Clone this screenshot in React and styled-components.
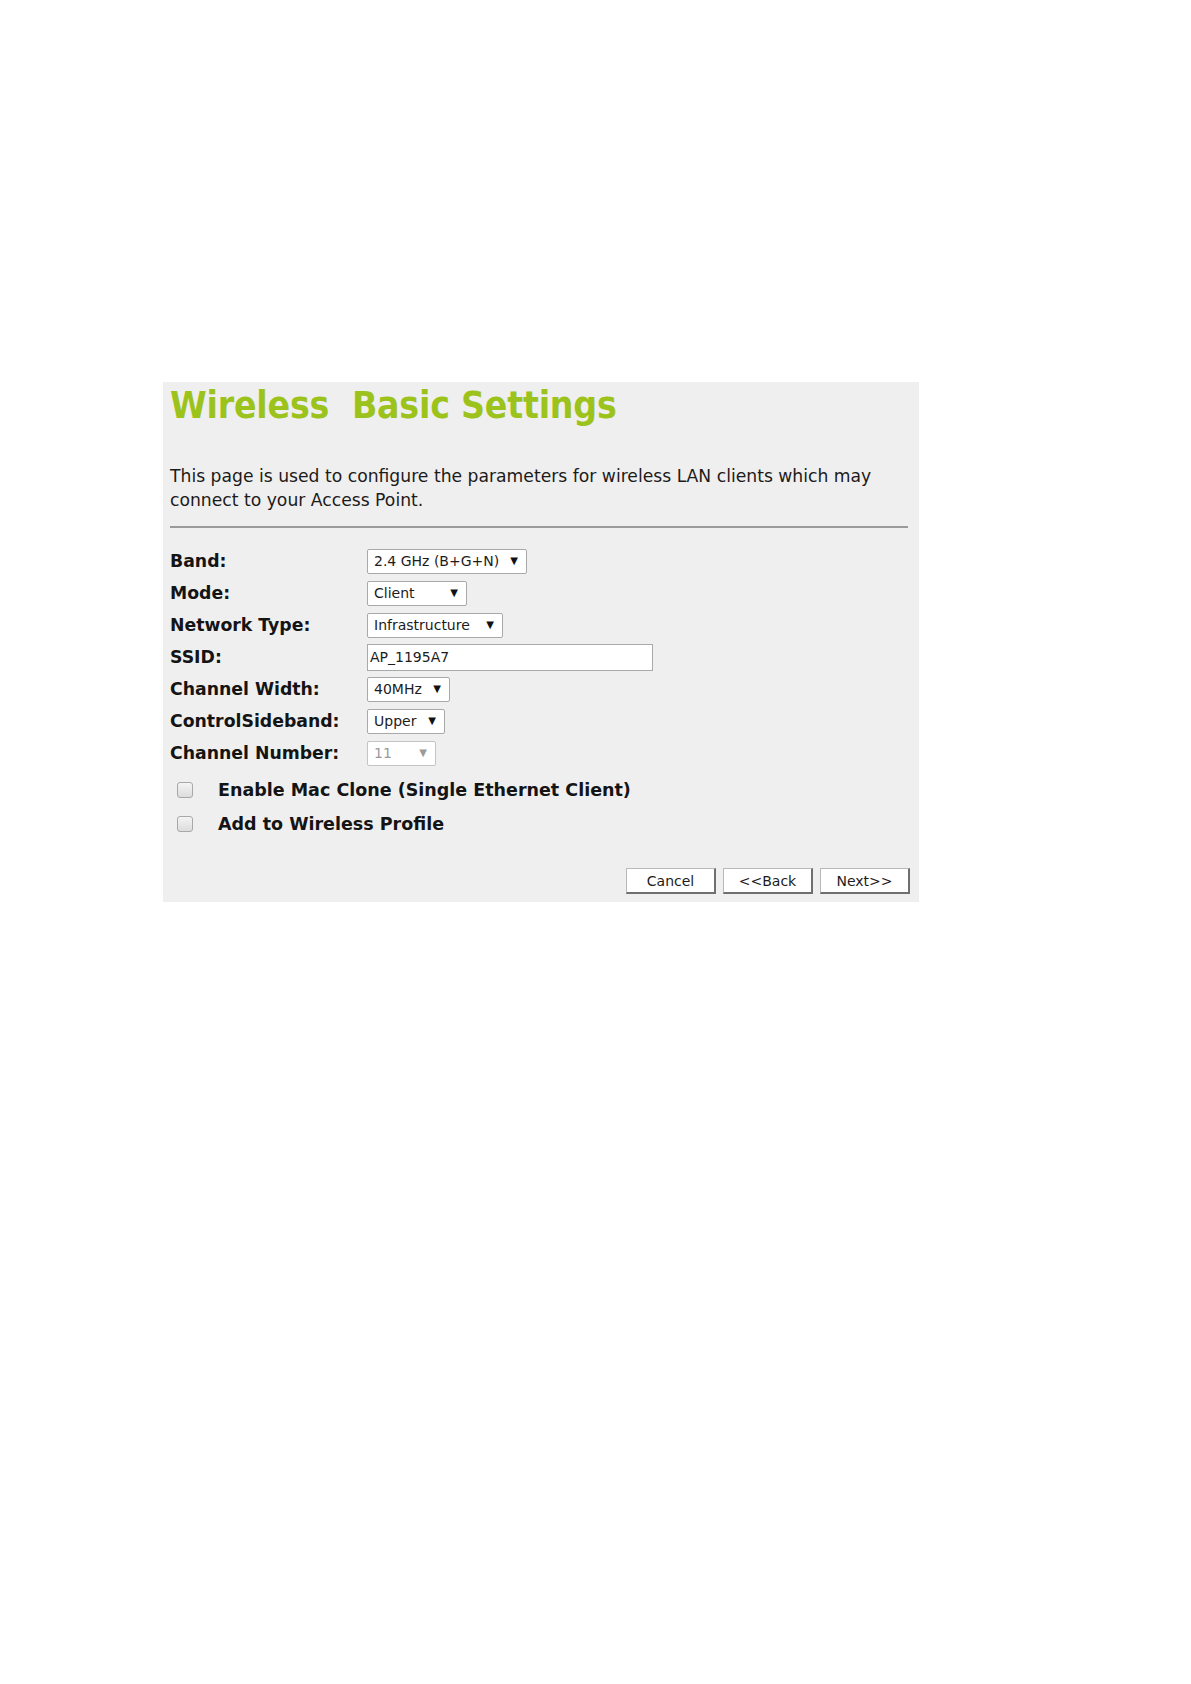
import React from "react";
import styled, { createGlobalStyle } from "styled-components";

const GlobalStyle = createGlobalStyle`
  body {
    margin: 0;
    background: #ffffff;
    font-family: "DejaVu Sans", Verdana, sans-serif;
  }
`;

const Page = styled.div`
  width: 1191px;
  min-height: 1684px;
  padding-top: 382px;
  padding-left: 163px;
  box-sizing: border-box;
`;

const Panel = styled.div`
  width: 756px;
  height: 520px;
  background: #efefef;
  box-sizing: border-box;
  padding: 2px 11px 0 7px;
  display: flex;
  flex-direction: column;
`;

const Title = styled.h1`
  margin: 0;
  font-family: "DejaVu Sans Condensed", "DejaVu Sans", Verdana, sans-serif;
  font-size: 37px;
  line-height: 44px;
  font-weight: bold;
  color: #9cc31b;
  letter-spacing: -0.2px;
  white-space: pre;
`;

const Description = styled.p`
  margin: 36px 0 0;
  font-size: 17.2px;
  line-height: 24px;
  color: #1d1a1a;
`;

const Divider = styled.hr`
  margin: 14px 0 0;
  border: none;
  height: 2px;
  background: #9a9a9a;
`;

const Form = styled.div`
  margin-top: 17px;
  display: flex;
  flex-direction: column;
`;

const Row = styled.div`
  display: flex;
  align-items: center;
  height: 32px;
`;

const Label = styled.div`
  width: 197px;
  font-size: 17.3px;
  font-weight: bold;
  color: #141414;
`;

const SelectBox = styled.div`
  width: ${(p) => p.$w}px;
  height: 25px;
  box-sizing: border-box;
  background: #ffffff;
  border: 1px solid ${(p) => (p.$disabled ? "#c4c4c4" : "#a9a9a9")};
  border-radius: 2px;
  display: flex;
  align-items: center;
  justify-content: space-between;
  padding: 0 8px 0 6px;
  font-size: 14px;
  color: ${(p) => (p.$disabled ? "#9a9a9a" : "#1c1c1c")};
`;

const Arrow = styled.span`
  font-size: 10px;
  line-height: 1;
  color: ${(p) => (p.$disabled ? "#9a9a9a" : "#111")};
`;

const TextInput = styled.div`
  width: 286px;
  height: 27px;
  box-sizing: border-box;
  background: #ffffff;
  border: 1px solid #a9a9a9;
  display: flex;
  align-items: center;
  padding-left: 2px;
  font-size: 14px;
  color: #1c1c1c;
`;

const CheckGroup = styled.div`
  margin-top: 4px;
  display: flex;
  flex-direction: column;
`;

const CheckRow = styled.div`
  display: flex;
  align-items: center;
  height: 34px;
  padding-left: 7px;
`;

const CheckBox = styled.div`
  width: 16px;
  height: 16px;
  box-sizing: border-box;
  border: 1px solid #a8a8a8;
  border-radius: 3px;
  background: linear-gradient(#f4f4f4, #dcdcdc);
`;

const CheckLabel = styled.span`
  margin-left: 25px;
  font-size: 17.5px;
  font-weight: bold;
  color: #141414;
`;

const Buttons = styled.div`
  margin: 27px -2px 0 0;
  display: flex;
  justify-content: flex-end;
  gap: 7px;
`;

const Button = styled.button`
  width: 90px;
  height: 26px;
  box-sizing: border-box;
  background: #ffffff;
  border: 1px solid #b9b9b9;
  border-right: 2px solid #6f6f6f;
  border-bottom: 2px solid #6f6f6f;
  font-family: "DejaVu Sans", Verdana, sans-serif;
  font-size: 14px;
  color: #1c1c1c;
  padding: 0;
`;

const Select = ({ w, value, disabled }) => (
  <SelectBox $w={w} $disabled={disabled}>
    <span>{value}</span>
    <Arrow $disabled={disabled}>▼</Arrow>
  </SelectBox>
);

export default function App() {
  return (
    <Page>
      <GlobalStyle />
      <Panel>
        <Title>{"Wireless  Basic Settings"}</Title>
        <Description>
          This page is used to configure the parameters for wireless LAN clients which may
          <br />
          connect to your Access Point.
        </Description>
        <Divider />
        <Form>
          <Row>
            <Label>Band:</Label>
            <Select w={160} value="2.4 GHz (B+G+N)" />
          </Row>
          <Row>
            <Label>Mode:</Label>
            <Select w={100} value="Client" />
          </Row>
          <Row>
            <Label>Network Type:</Label>
            <Select w={136} value="Infrastructure" />
          </Row>
          <Row>
            <Label>SSID:</Label>
            <TextInput>AP_1195A7</TextInput>
          </Row>
          <Row>
            <Label>Channel Width:</Label>
            <Select w={83} value="40MHz" />
          </Row>
          <Row>
            <Label>ControlSideband:</Label>
            <Select w={78} value="Upper" />
          </Row>
          <Row>
            <Label>Channel Number:</Label>
            <Select w={69} value="11" disabled />
          </Row>
          <CheckGroup>
            <CheckRow>
              <CheckBox />
              <CheckLabel>Enable Mac Clone (Single Ethernet Client)</CheckLabel>
            </CheckRow>
            <CheckRow>
              <CheckBox />
              <CheckLabel>Add to Wireless Profile</CheckLabel>
            </CheckRow>
          </CheckGroup>
        </Form>
        <Buttons>
          <Button>Cancel</Button>
          <Button>&lt;&lt;Back</Button>
          <Button>Next&gt;&gt;</Button>
        </Buttons>
      </Panel>
    </Page>
  );
}
